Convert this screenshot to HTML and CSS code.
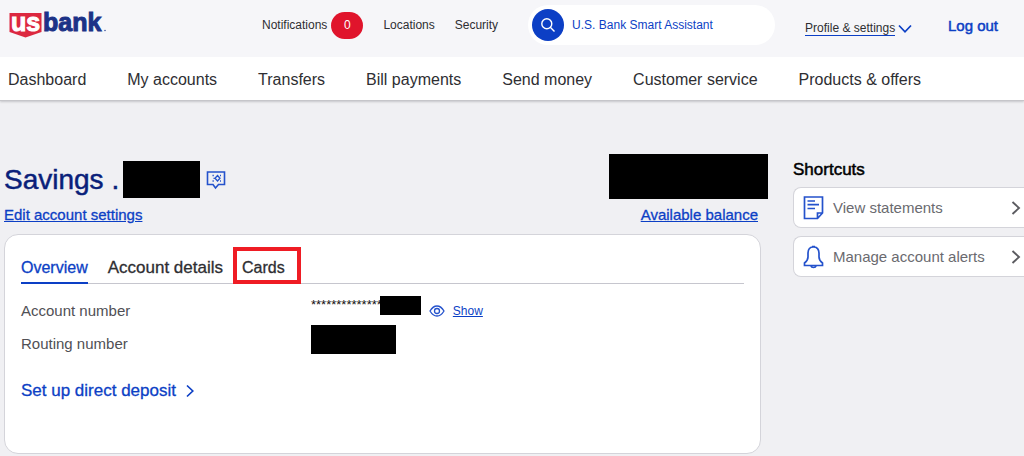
FILE: index.html
```html
<!DOCTYPE html>
<html lang="en">
<head>
<meta charset="utf-8">
<meta name="viewport" content="width=device-width, initial-scale=1">
<title>Savings account</title>
<link rel="stylesheet" href="styles.css">
</head>
<body>
<header class="site-header">
  <div class="topbar">
    <a class="logo" href="#" aria-label="U.S. Bank">
      <svg width="104" height="40" viewBox="0 -7 104 40">
        <path d="M1.500 1H33.500V20L17.500 25.500L1.500 20Z" fill="#dc2840"/>
        <text class="logo-us" x="3" y="19">us</text>
        <text class="logo-bank" x="35" y="19">bank</text>
        <circle cx="97" cy="18.500" r="0.700" fill="#1c3287"/>
      </svg>
    </a>
    <nav class="utility" aria-label="Utility">
      <a class="notifications" href="#">Notifications <span class="badge">0</span></a>
      <a href="#">Locations</a>
      <a href="#">Security</a>
    </nav>
    <button class="assistant" type="button">
      <span class="assistant-icon">
        <svg width="16" height="16" viewBox="0 0 16 16" fill="none" stroke="#fff" stroke-width="1.400"><circle cx="6.800" cy="6.800" r="5"/><path d="M10.300 10.300L14.500 14.500"/></svg>
      </span>
      U.S. Bank Smart Assistant
    </button>
    <button class="profile" type="button"><span>Profile &amp; settings</span>
      <svg width="14" height="10" viewBox="0 0 14 10" fill="none" stroke="#0c3fc5" stroke-width="1.700"><path d="M1 1.500L7 7.800L13 1.500"/></svg>
    </button>
    <a class="logout" href="#">Log out</a>
  </div>
  <nav class="main-nav" aria-label="Main">
    <a href="#">Dashboard</a>
    <a href="#">My accounts</a>
    <a href="#">Transfers</a>
    <a href="#">Bill payments</a>
    <a href="#">Send money</a>
    <a href="#">Customer service</a>
    <a href="#">Products &amp; offers</a>
  </nav>
</header>
<div class="page">
  <main class="account">
    <div class="account-head">
      <div class="account-name">
        <div class="title-row">
          <h1>Savings .</h1>
          <span class="redacted redacted-title"></span>
          <svg class="title-icon" width="20" height="20" viewBox="0 0 20 20" fill="none" stroke="#2452cc" stroke-width="1.600"><path d="M1.500 2H18.500V14.500H12.500L9.500 18L7 14.500H1.500Z"/><path stroke-width="1.300" d="M11.500 5.500L14 8.300L11.500 11L9 8.300ZM6.500 5.500H7.800M7.500 8.300H8.500M6.500 11H7.800M14 5.500H15M14 11H15"/></svg>
        </div>
        <a class="text-link" href="#">Edit account settings</a>
      </div>
      <div class="balance">
        <span class="redacted redacted-balance"></span>
        <a class="text-link" href="#">Available balance</a>
      </div>
    </div>
    <section class="card">
      <div class="tabs" role="tablist">
        <button class="tab tab-active" role="tab" aria-selected="true" type="button">Overview</button>
        <button class="tab tab-wide" role="tab" aria-selected="false" type="button">Account details</button>
        <button class="tab tab-marked" role="tab" aria-selected="false" type="button">Cards</button>
      </div>
      <dl class="details">
        <dt>Account number</dt>
        <dd>
          <span class="mask">**************</span><span class="redacted redacted-account"></span>
          <button class="show" type="button">
            <svg width="16" height="12" viewBox="0 0 16 12" fill="none" stroke="#2452cc" stroke-width="1.300"><path d="M1 6C3 2.600 5.300 1 8 1S13 2.600 15 6C13 9.400 10.700 11 8 11S3 9.400 1 6Z"/><circle cx="8" cy="6" r="2.500"/></svg>
            <span>Show</span>
          </button>
        </dd>
        <dt>Routing number</dt>
        <dd><span class="redacted redacted-routing"></span></dd>
      </dl>
      <a class="deposit" href="#">Set up direct deposit
        <svg width="8" height="14" viewBox="0 0 8 14" fill="none" stroke="#0c3fc5" stroke-width="1.700"><path d="M1 1.500L6.800 7L1 12.500"/></svg>
      </a>
    </section>
  </main>
  <aside class="shortcuts">
    <h2>Shortcuts</h2>
    <a class="shortcut" href="#">
      <svg width="22" height="24" viewBox="0 0 22 24" fill="none" stroke="#2452cc" stroke-width="1.700"><path d="M1.500 1H19.500V17L14.500 22.500H1.500ZM19.500 17H14.500V22.500M4.500 5H12M4.500 8.700H16M4.500 12.500H12"/></svg>
      <span>View statements</span>
      <svg class="chevron" width="10" height="14" viewBox="0 0 10 14" fill="none" stroke="#5b5b60" stroke-width="1.900"><path d="M1.500 1L8 7L1.500 13"/></svg>
    </a>
    <a class="shortcut" href="#">
      <svg width="22" height="24" viewBox="0 0 22 24" fill="none" stroke="#2452cc" stroke-width="1.700"><path d="M10.500 1.800C7 1.800 5 4.500 5 8V12C5 15 3.500 16.500 1.500 18V20.500H19.500V18C17.500 16.500 16 15 16 12V8C16 4.500 14 1.800 10.500 1.800ZM9 1.500H12M8 21C8.500 23 12.500 23 13 21"/></svg>
      <span>Manage account alerts</span>
      <svg class="chevron" width="10" height="14" viewBox="0 0 10 14" fill="none" stroke="#5b5b60" stroke-width="1.900"><path d="M1.500 1L8 7L1.500 13"/></svg>
    </a>
  </aside>
</div>
</body>
</html>
```
FILE: styles.css
```css
:root {
  --blue: #0c3fc5;
  --navy: #0a1f7a;
  --ink: #2e2e32;
}
* { box-sizing: border-box; }
body {
  margin: 0;
  background: #f0f0f3;
  color: var(--ink);
  font-family: "Liberation Sans", Arial, sans-serif;
  font-size: 15px;
}
a { color: inherit; text-decoration: none; }
button {
  padding: 0;
  border: 0;
  background: none;
  color: inherit;
  font: inherit;
  cursor: pointer;
}
svg { flex: none; display: block; }
h1, h2, dl, dd { margin: 0; }

.site-header {
  border-bottom: 1px solid #c6c6ca;
  box-shadow: 0 1px 2px #c6c6ca;
}
.topbar {
  display: flex;
  align-items: center;
  min-height: 57px;
  padding: 0 26px 7px 8px;
  background: #f6f6f9;
  font-size: 12px;
}
.logo-us, .logo-bank {
  font-size: 25px;
  font-weight: 700;
  stroke-width: 1px;
}
.logo-us { fill: #fff; stroke: #fff; }
.logo-bank { fill: #1c3287; stroke: #1c3287; }
.utility {
  display: flex;
  align-items: center;
  gap: 20px;
  margin-left: 150px;
}
.notifications { display: flex; align-items: center; gap: 4px; }
.badge {
  display: grid;
  place-items: center;
  width: 32px;
  height: 27px;
  border-radius: 14px;
  background: #e0142c;
  color: #fff;
}
.assistant {
  display: flex;
  align-items: center;
  gap: 8px;
  width: 247px;
  height: 40px;
  margin-left: 30px;
  padding-left: 4px;
  border-radius: 20px;
  background: #fff;
  color: var(--blue);
}
.assistant-icon {
  display: grid;
  place-items: center;
  width: 32px;
  height: 32px;
  border-radius: 50%;
  background: var(--blue);
}
.profile {
  display: flex;
  align-items: center;
  gap: 3px;
  margin-left: 30px;
  padding-top: 8px;
}
.profile span { border-bottom: 1px solid var(--blue); line-height: 13px; }
.logout {
  margin-left: auto;
  color: var(--blue);
  font-size: 15px;
  -webkit-text-stroke: 0.5px;
}
.main-nav {
  display: flex;
  align-items: center;
  gap: 41px;
  min-height: 43px;
  padding: 2px 8px 0;
  background: #fff;
  font-size: 16px;
  white-space: nowrap;
}

.page {
  display: grid;
  grid-template-columns: minmax(0, 757fr) minmax(0, 231fr);
  gap: 32px;
  padding: 53px 0 2px 4px;
}
.redacted { display: block; background: #000; }
.account-head {
  display: flex;
  justify-content: space-between;
  min-height: 80px;
}
.account-name { padding-top: 7px; }
.title-row { display: flex; align-items: center; }
h1 {
  color: var(--navy);
  font-size: 28px;
  font-weight: 400;
  line-height: 37px;
  -webkit-text-stroke: 0.5px;
}
.redacted-title { width: 77px; height: 37px; margin-left: 4px; }
.title-icon { margin-left: 6px; }
.text-link {
  color: var(--blue);
  text-decoration: underline;
  line-height: 18px;
  -webkit-text-stroke: 0.3px;
}
.account-name .text-link { display: inline-block; margin-top: 8px; }
.balance {
  display: flex;
  flex-direction: column;
  align-items: flex-end;
  gap: 7px;
  padding-right: 3px;
}
.redacted-balance { width: 159px; height: 45px; margin-right: -10px; }

.card {
  min-height: 220px;
  padding: 12px 16px;
  border: 1px solid #d4d4da;
  border-radius: 14px;
  background: #fff;
}
.tabs {
  display: flex;
  align-items: stretch;
  gap: 20px;
  height: 37px;
  box-shadow: inset 0 -1px #c6c6ce;
}
.tab { font-size: 16px; padding-top: 4px; -webkit-text-stroke: 0.3px; }
.tab-wide { font-size: 17px; }
.tab-active {
  padding-top: 6px;
  border-bottom: 2px solid var(--blue);
  color: var(--blue);
}
.tab-marked {
  margin-left: -10px;
  padding: 4px 12px 0 5px;
  border: 4px solid #ef1c24;
}
.details {
  display: grid;
  grid-template-columns: 290px 1fr;
  grid-template-rows: 30px 36px;
  margin-top: 11px;
  color: #505055;
}
dt { align-self: center; }
dd { display: flex; align-items: flex-start; }
.mask { color: #111; font-size: 13px; line-height: 20px; }
.redacted-account { width: 41px; height: 19px; margin: 1px 0 0 -2px; }
.redacted-routing { width: 85px; height: 29px; }
.show {
  display: flex;
  align-items: center;
  gap: 8px;
  height: 32px;
  margin-left: 8px;
  color: var(--blue);
  font-size: 12px;
}
.show span { text-decoration: underline; }
.deposit {
  display: inline-flex;
  align-items: center;
  gap: 10px;
  margin-top: 20px;
  color: var(--blue);
  font-size: 17px;
  -webkit-text-stroke: 0.3px;
}

.shortcuts { padding-top: 6px; }
h2 {
  color: #000;
  font-size: 17px;
  font-weight: 400;
  line-height: 20px;
  margin-bottom: 7px;
  -webkit-text-stroke: 0.5px;
}
.shortcut {
  display: flex;
  align-items: center;
  gap: 8px;
  height: 41px;
  margin-bottom: 8px;
  padding: 0 3px 0 9px;
  border: 1px solid #d4d4da;
  border-right: 0;
  border-radius: 8px 0 0 8px;
  background: #fff;
  color: #6a6a6f;
  white-space: nowrap;
}
.chevron { margin-left: auto; }
```
